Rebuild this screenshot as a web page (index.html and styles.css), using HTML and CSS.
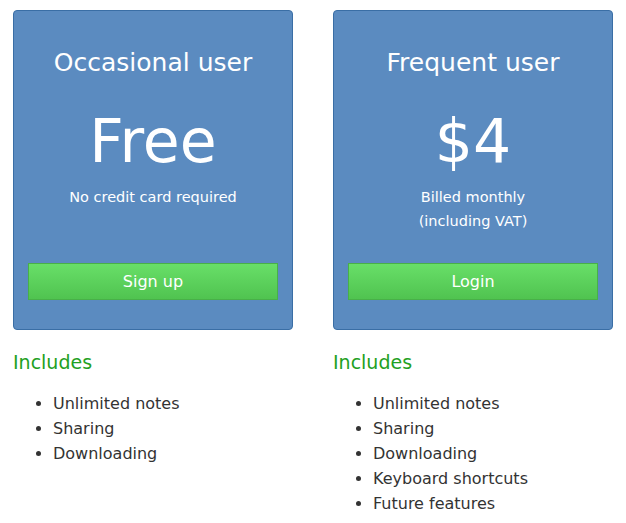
FILE: index.html
```html
<!DOCTYPE html>
<html>
<head>
    <title>Pricing</title>
    <link rel="stylesheet" href="styles.css">
</head>
<body>
    <div class="plans">
        <div class="plan">
            <div class="plan-box">
                <h2>Occasional user</h2>
                <div class="price">Free</div>
                <p class="note">No credit card required</p>
                <button class="plan-btn">Sign up</button>
            </div>
            <h3>Includes</h3>
            <ul class="features">
                <li>Unlimited notes</li>
                <li>Sharing</li>
                <li>Downloading</li>
            </ul>
        </div>
        <div class="plan">
            <div class="plan-box">
                <h2>Frequent user</h2>
                <div class="price">$4</div>
                <p class="note">Billed monthly<br>(including VAT)</p>
                <button class="plan-btn">Login</button>
            </div>
            <h3>Includes</h3>
            <ul class="features">
                <li>Unlimited notes</li>
                <li>Sharing</li>
                <li>Downloading</li>
                <li>Keyboard shortcuts</li>
                <li>Future features</li>
            </ul>
        </div>
    </div>
</body>
</html>
```

FILE: styles.css
```css
body {
    font-family: "DejaVu Sans", sans-serif;
    margin: 0;
    padding: 10px 13px;
    background-color: white;
    color: #333;
}
.plans {
    display: flex;
    gap: 40px;
}
.plan {
    width: 280px;
}
.plan-box {
    background-color: #5b8bc0;
    border: 1px solid #3a6ea5;
    border-radius: 4px;
    color: white;
    text-align: center;
    height: 320px;
    box-sizing: border-box;
    padding: 36px 14px 0;
    display: flex;
    flex-direction: column;
}
.plan-box h2 {
    font-size: 25px;
    font-weight: normal;
    margin: 0;
    line-height: 31px;
}
.price {
    font-size: 60px;
    line-height: 70px;
    margin-top: 28px;
}
.note {
    font-size: 14.5px;
    line-height: 24px;
    margin: 9px 0 0;
}
.plan-btn {
    margin-top: auto;
    margin-bottom: 29px;
    height: 37px;
    width: 100%;
    background: linear-gradient(#68df68, #50c350);
    border: 1px solid #48b048;
    color: white;
    font-family: inherit;
    font-size: 16px;
    cursor: pointer;
}
h3 {
    color: #22a022;
    font-size: 19px;
    font-weight: normal;
    margin: 20px 0 0;
    line-height: 24px;
}
.features {
    margin: 17px 0 0;
    padding-left: 40px;
    font-size: 16px;
    line-height: 25px;
}
```
